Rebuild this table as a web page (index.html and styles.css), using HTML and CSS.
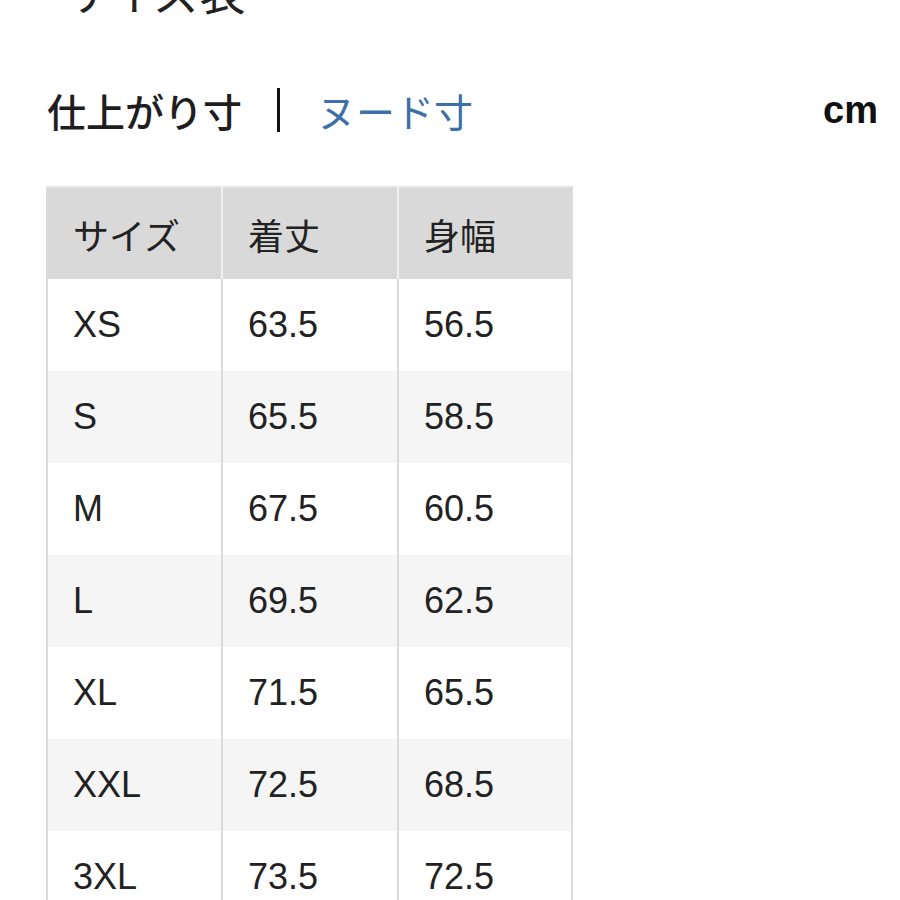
FILE: index.html
```html
<!DOCTYPE html>
<html lang="ja">
<head>
<meta charset="utf-8">
<link rel="stylesheet" href="styles.css">
</head>
<body>
<div class="page">
  <h1 class="title">サイズ表</h1>
  <div class="tabs">
    <div class="tab-group">
      <span class="tab active">仕上がり寸</span>
      <span class="sep"></span>
      <span class="tab link">ヌード寸</span>
    </div>
    <span class="unit">cm</span>
  </div>
  <table class="size-table">
    <thead>
      <tr><th>サイズ</th><th>着丈</th><th>身幅</th></tr>
    </thead>
    <tbody>
      <tr><td>XS</td><td>63.5</td><td>56.5</td></tr>
      <tr class="alt"><td>S</td><td>65.5</td><td>58.5</td></tr>
      <tr><td>M</td><td>67.5</td><td>60.5</td></tr>
      <tr class="alt"><td>L</td><td>69.5</td><td>62.5</td></tr>
      <tr><td>XL</td><td>71.5</td><td>65.5</td></tr>
      <tr class="alt"><td>XXL</td><td>72.5</td><td>68.5</td></tr>
      <tr><td>3XL</td><td>73.5</td><td>72.5</td></tr>
    </tbody>
  </table>
</div>
</body>
</html>
```

FILE: styles.css
```css
html, body {
  margin: 0;
  padding: 0;
  background: #ffffff;
}
body {
  font-family: "Liberation Sans", "Noto Sans CJK JP", sans-serif;
  color: #222222;
  overflow: hidden;
}
.page {
  width: 900px;
  height: 900px;
  overflow: hidden;
}
.title {
  margin: -36px 0 0 63px;
  font-family: "Noto Sans CJK JP", sans-serif;
  font-weight: 400;
  font-size: 46px;
  line-height: 52px;
  color: #222;
}
.tabs {
  display: flex;
  align-items: center;
  justify-content: space-between;
  margin: 70px 22px 0 47px;
  height: 48px;
}
.tab-group {
  display: flex;
  align-items: center;
}
.tab {
  font-family: "Noto Sans CJK JP", sans-serif;
  font-size: 39px;
  line-height: 48px;
}
.tab.active {
  font-weight: 500;
  color: #1e1e1e;
}
.tab.link {
  color: #3d6fa8;
  font-weight: 400;
}
.sep {
  display: block;
  width: 3px;
  height: 44px;
  background: #111;
  margin: 0 37px 0 35px;
}
.unit {
  font-family: "Liberation Sans", sans-serif;
  font-weight: 700;
  font-size: 38px;
  color: #111;
}
.size-table {
  margin: 52px 0 0 46px;
  border-collapse: collapse;
  border-left: 2px solid #dcdcdc;
  border-right: 2px solid #dcdcdc;
  border-top: 2px solid #e4e4e4;
}
.size-table th,
.size-table td {
  text-align: left;
  vertical-align: middle;
  padding: 0 0 0 25px;
  height: 92px;
  font-size: 36px;
  font-weight: 400;
  color: #222;
  box-sizing: border-box;
}
.size-table th {
  font-family: "Noto Sans CJK JP", sans-serif;
  background: #d9d9d9;
  border-right: 2px solid #f2f2f2;
}
.size-table td {
  font-family: "Liberation Sans", sans-serif;
  border-right: 2px solid #dadada;
}
.size-table th:nth-child(1),
.size-table td:nth-child(1) { width: 175px; }
.size-table th:nth-child(2),
.size-table td:nth-child(2) { width: 176px; }
.size-table th:nth-child(3),
.size-table td:nth-child(3) { width: 174px; }
.size-table th:last-child,
.size-table td:last-child { border-right: none; }
.size-table tr.alt td {
  background: #f5f5f5;
}
```
